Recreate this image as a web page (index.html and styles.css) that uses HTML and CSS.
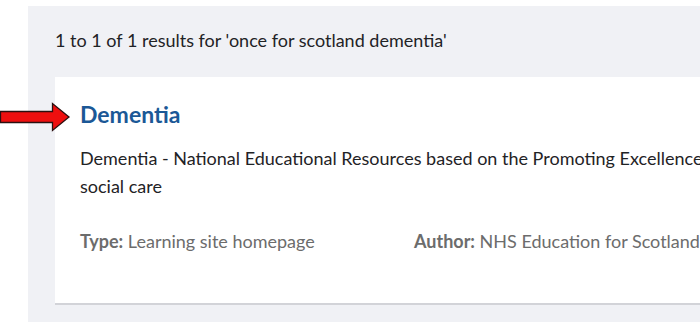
FILE: index.html
```html
<!DOCTYPE html>
<html lang="en">
<head>
<meta charset="utf-8">
<title>Search results</title>
<link rel="stylesheet" href="styles.css">
</head>
<body>
<div class="page">
  <div class="arrow" aria-hidden="true">
    <svg width="72" height="32" viewBox="0 0 72 32">
      <path d="M0.5 9.5 H52.5 V1.5 L69 15 L52.5 28.5 V20.5 H0.5 Z" fill="#ee0f0f" stroke="#2a1010" stroke-width="1.3" stroke-linejoin="miter"/>
    </svg>
  </div>
  <main class="panel">
    <p class="summary">1 to 1 of 1 results for 'once for scotland dementia'</p>
    <article class="card">
      <h2 class="title"><a href="#">Dementia</a></h2>
      <p class="desc">Dementia - National Educational Resources based on the Promoting Excellence framework for health and<br>social care</p>
      <div class="meta">
        <span class="meta-item"><b>Type:</b> Learning site homepage</span>
        <span class="meta-item"><b>Author:</b> NHS Education for Scotland</span>
      </div>
    </article>
  </main>
</div>
</body>
</html>
```

FILE: styles.css
```css
html, body {
  margin: 0;
  padding: 0;
  background: #ffffff;
  overflow: hidden;
}
body {
  font-family: Lato, "Liberation Sans", sans-serif;
  color: #1f2326;
  width: 700px;
  height: 322px;
}
.page {
  position: relative;
  padding: 6px 0 0 28px;
  width: 1200px;
}
.panel {
  background: #f0f1f5;
  padding: 20px 0 18px 27px;
}
.summary {
  margin: 0 0 23px;
  font-size: 18px;
  line-height: 28px;
}
.card {
  background: #ffffff;
  border-bottom: 2px solid #d2d3d8;
  padding: 22px 25px 48px 25px;
}
.title {
  margin: 0 0 15px;
  font-size: 23px;
  line-height: 30px;
  font-weight: 700;
}
.title a {
  color: #1b5896;
  text-decoration: none;
}
.desc {
  margin: 0 0 27px;
  font-size: 18px;
  line-height: 28px;
  white-space: nowrap;
}
.meta {
  display: flex;
  font-size: 18px;
  line-height: 28px;
  color: #6c6c6c;
}
.meta-item {
  width: 334px;
}
.meta-item b {
  font-weight: 700;
}
.arrow {
  position: absolute;
  left: 0;
  top: 102px;
  line-height: 0;
}
```
